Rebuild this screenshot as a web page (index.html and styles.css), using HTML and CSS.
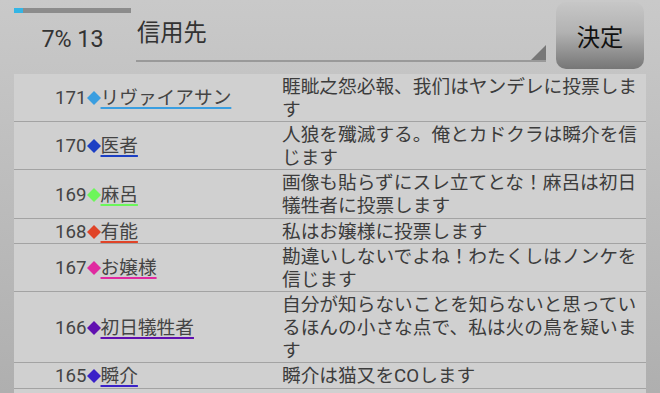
FILE: index.html
```html
<!DOCTYPE html>
<html lang="ja">
<head>
    <meta charset="UTF-8">
    <meta name="viewport" content="width=device-width, initial-scale=1.0">
    <title>投票</title>
    <link rel="stylesheet" href="styles.css">
</head>
<body>
    <div class="header">
        <div class="progress-box">
            <div class="progress"><div class="progress-fill"></div></div>
            <div class="progress-text">7% 13</div>
        </div>
        <div class="spinner">信用先</div>
        <button class="decide">決定</button>
    </div>

    <div class="list">
        <div class="row">
            <div class="who">171<svg class="mark c-sky" viewBox="0 0 14 14"><path d="M7 0 14 7 7 14 0 7z"/></svg><span class="name c-sky">リヴァイアサン</span></div>
            <div class="msg">睚眦之怨必報、我们はヤンデレに投票します</div>
        </div>
        <div class="row">
            <div class="who">170<svg class="mark c-blue" viewBox="0 0 14 14"><path d="M7 0 14 7 7 14 0 7z"/></svg><span class="name c-blue">医者</span></div>
            <div class="msg">人狼を殲滅する。俺とカドクラは瞬介を信じます</div>
        </div>
        <div class="row">
            <div class="who">169<svg class="mark c-green" viewBox="0 0 14 14"><path d="M7 0 14 7 7 14 0 7z"/></svg><span class="name c-green">麻呂</span></div>
            <div class="msg">画像も貼らずにスレ立てとな！麻呂は初日犠牲者に投票します</div>
        </div>
        <div class="row">
            <div class="who">168<svg class="mark c-red" viewBox="0 0 14 14"><path d="M7 0 14 7 7 14 0 7z"/></svg><span class="name c-red">有能</span></div>
            <div class="msg">私はお嬢様に投票します</div>
        </div>
        <div class="row">
            <div class="who">167<svg class="mark c-pink" viewBox="0 0 14 14"><path d="M7 0 14 7 7 14 0 7z"/></svg><span class="name c-pink">お嬢様</span></div>
            <div class="msg">勘違いしないでよね！わたくしはノンケを信じます</div>
        </div>
        <div class="row">
            <div class="who">166<svg class="mark c-purple" viewBox="0 0 14 14"><path d="M7 0 14 7 7 14 0 7z"/></svg><span class="name c-purple">初日犠牲者</span></div>
            <div class="msg">自分が知らないことを知らないと思っているほんの小さな点で、私は火の鳥を疑います</div>
        </div>
        <div class="row">
            <div class="who">165<svg class="mark c-indigo" viewBox="0 0 14 14"><path d="M7 0 14 7 7 14 0 7z"/></svg><span class="name c-indigo">瞬介</span></div>
            <div class="msg">瞬介は猫又をCOします</div>
        </div>
    </div>
</body>
</html>
```

FILE: styles.css
```css
html, body {
    height: 100%;
}
body {
    margin: 0;
    font-family: Roboto, "Noto Sans CJK JP", sans-serif;
    color: #3c3c3c;
    background: linear-gradient(#c9c9c9, #afafaf);
    display: flex;
    flex-direction: column;
    overflow: hidden;
}
.header {
    display: flex;
    align-items: flex-start;
    padding: 0 16px 0 14px;
    height: 74px;
    box-sizing: border-box;
}
.progress-box {
    width: 117px;
    padding-top: 8px;
}
.progress {
    height: 5px;
    background: #8c8c8c;
}
.progress-fill {
    width: 9px;
    height: 100%;
    background: #33b5e5;
}
.progress-text {
    margin-top: 12px;
    text-align: center;
    font-size: 23.3px;
    line-height: 28px;
    color: #333;
}
.spinner {
    position: relative;
    width: 410px;
    height: 62px;
    box-sizing: border-box;
    margin-left: 5px;
    padding: 17px 0 0 1px;
    font-size: 23.3px;
    line-height: 32px;
    color: #333;
    border-bottom: 2px solid #999;
}
.spinner::after {
    content: "";
    position: absolute;
    right: 0;
    bottom: 0;
    border-style: solid;
    border-width: 0 0 15px 15px;
    border-color: transparent transparent #777 transparent;
}
.decide {
    margin: 2px 0 0 10px;
    width: 88px;
    height: 67px;
    border: none;
    border-radius: 10px;
    background: linear-gradient(#c7c7c7, #b2b2b2 45%, #767676);
    font-family: Roboto, "Noto Sans CJK JP", sans-serif;
    font-size: 23.3px;
    color: #111;
    padding: 0;
}
.list {
    flex: 1;
    margin: 0 14px;
    background: #d0d0d0;
}
.row {
    display: grid;
    grid-template-columns: 268px 1fr;
    padding-top: 2px;
    border-bottom: 1px solid #a3a3a3;
    font-size: 18.7px;
    line-height: 22.6px;
}
.who {
    align-self: center;
    padding-left: 41px;
    color: #444;
    white-space: nowrap;
}
.mark {
    width: 14px;
    height: 14px;
    vertical-align: -1px;
    fill: currentColor;
}
.name {
    color: #444;
    text-decoration: underline 2px;
    text-underline-offset: 3px;
}
.msg {
    color: #3c3c3c;
}
.c-sky { color: #3a9ee0; text-decoration-color: #3a9ee0; }
.c-blue { color: #1c3fc4; text-decoration-color: #1c3fc4; }
.c-green { color: #6cf65a; text-decoration-color: #6cf65a; }
.c-red { color: #e04428; text-decoration-color: #e04428; }
.c-pink { color: #e02aa0; text-decoration-color: #e02aa0; }
.c-purple { color: #6010b0; text-decoration-color: #6010b0; }
.c-indigo { color: #3a22c8; text-decoration-color: #3a22c8; }
.name.c-sky, .name.c-blue, .name.c-green, .name.c-red,
.name.c-pink, .name.c-purple, .name.c-indigo {
    color: #444;
}
```
